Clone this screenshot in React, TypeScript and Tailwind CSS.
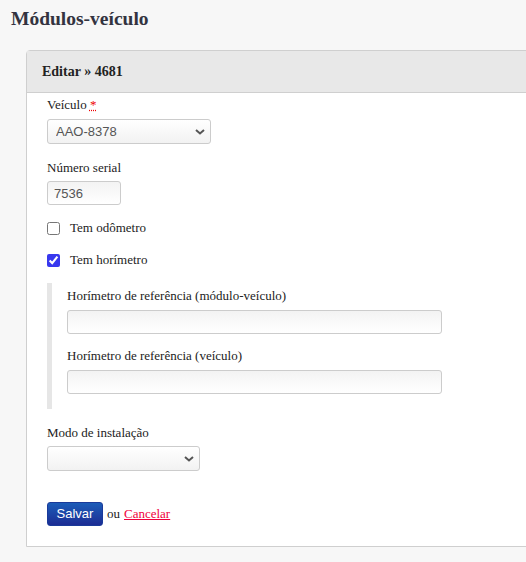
import React from "react";

const serif = "[font-family:Liberation_Serif,Times_New_Roman,serif]";
const sans = "[font-family:Liberation_Sans,Arial,sans-serif]";

function Chevron() {
  return (
    <svg
      viewBox="0 0 10 6"
      className="pointer-events-none absolute right-[6px] top-1/2 h-[6px] w-[10px] -translate-y-1/2"
    >
      <path d="M1 1l4 3.5L9 1" fill="none" stroke="#555" strokeWidth="2" />
    </svg>
  );
}

function Select({ width, value }: { width: string; value: string }) {
  return (
    <div className={`relative ${width}`}>
      <select
        className={`${sans} block h-[25px] w-full appearance-none rounded-[3px] border border-[#ccc] bg-gradient-to-b from-white to-[#f2f2f2] pl-[8px] text-[13px] text-[#555] outline-none`}
        defaultValue={value}
      >
        <option value={value}>{value}</option>
      </select>
      <Chevron />
    </div>
  );
}

function TextInput({ width, value }: { width: string; value?: string }) {
  return (
    <input
      type="text"
      defaultValue={value}
      className={`${sans} block h-[24px] ${width} rounded-[3px] border border-[#ccc] bg-gradient-to-b from-[#f3f3f3] to-white px-[6px] text-[13px] text-[#555] outline-none`}
    />
  );
}

function Label({ children, className = "" }: { children: React.ReactNode; className?: string }) {
  return (
    <label className={`${serif} block text-[13px] leading-[16px] text-[#222] ${className}`}>
      {children}
    </label>
  );
}

export default function App() {
  return (
    <div className="min-h-[562px] w-[526px] overflow-hidden bg-[#f7f7f7]">
      <h1 className={`${serif} px-[11px] pt-[4px] text-[19.5px] font-bold leading-[30px] text-[#333340]`}>
        Módulos-veículo
      </h1>

      <div className="ml-[26px] mt-[16px] w-[540px] rounded-tl-[4px] border border-[#cfcfcf] bg-white">
        <div className="flex h-[42px] items-center border-b border-[#cfcfcf] bg-[#e8e8e8] pl-[15px]">
          <h2 className={`${serif} text-[14px] font-bold text-[#222]`}>Editar » 4681</h2>
        </div>

        <div className="px-[20px] pb-[20px] pt-[4px]">
          <Label>
            Veículo{" "}
            <abbr title="obrigatório" className="text-[#e00] underline decoration-dotted">
              *
            </abbr>
          </Label>
          <div className="mt-[6px]">
            <Select width="w-[164px]" value="AAO-8378" />
          </div>

          <Label className="mt-[16px]">Número serial</Label>
          <div className="mt-[5px]">
            <TextInput width="w-[74px]" value="7536" />
          </div>

          <label className={`${serif} mt-[15px] flex h-[16px] items-center gap-[10px] text-[13px] text-[#222]`}>
            <input type="checkbox" className="m-0 h-[13px] w-[13px] accent-[#3838ee]" />
            Tem odômetro
          </label>

          <label className={`${serif} mt-[16px] flex h-[16px] items-center gap-[10px] text-[13px] text-[#222]`}>
            <input type="checkbox" defaultChecked className="m-0 h-[13px] w-[13px] accent-[#3838ee]" />
            Tem horímetro
          </label>

          <div className="mt-[15px] border-l-[5px] border-[#e6e6e6] pb-[15px] pl-[15px] pt-[5px]">
            <Label>Horímetro de referência (módulo-veículo)</Label>
            <div className="mt-[6px]">
              <TextInput width="w-[375px]" />
            </div>
            <Label className="mt-[14px]">Horímetro de referência (veículo)</Label>
            <div className="mt-[6px]">
              <TextInput width="w-[375px]" />
            </div>
          </div>

          <Label className="mt-[16px]">Modo de instalação</Label>
          <div className="mt-[5px]">
            <Select width="w-[153px]" value="" />
          </div>

          <div className={`${serif} mt-[31px] flex items-center gap-[4px] text-[13px] text-[#222]`}>
            <button
              type="button"
              className={`${sans} h-[24px] w-[56px] rounded-[3px] border border-[#1a3a9a] bg-gradient-to-b from-[#1c5cb8] to-[#1c2c94] text-[13px] text-white`}
            >
              Salvar
            </button>
            <span>ou</span>
            <a href="#" className="text-[#f0003c] underline">
              Cancelar
            </a>
          </div>
        </div>
      </div>
    </div>
  );
}
